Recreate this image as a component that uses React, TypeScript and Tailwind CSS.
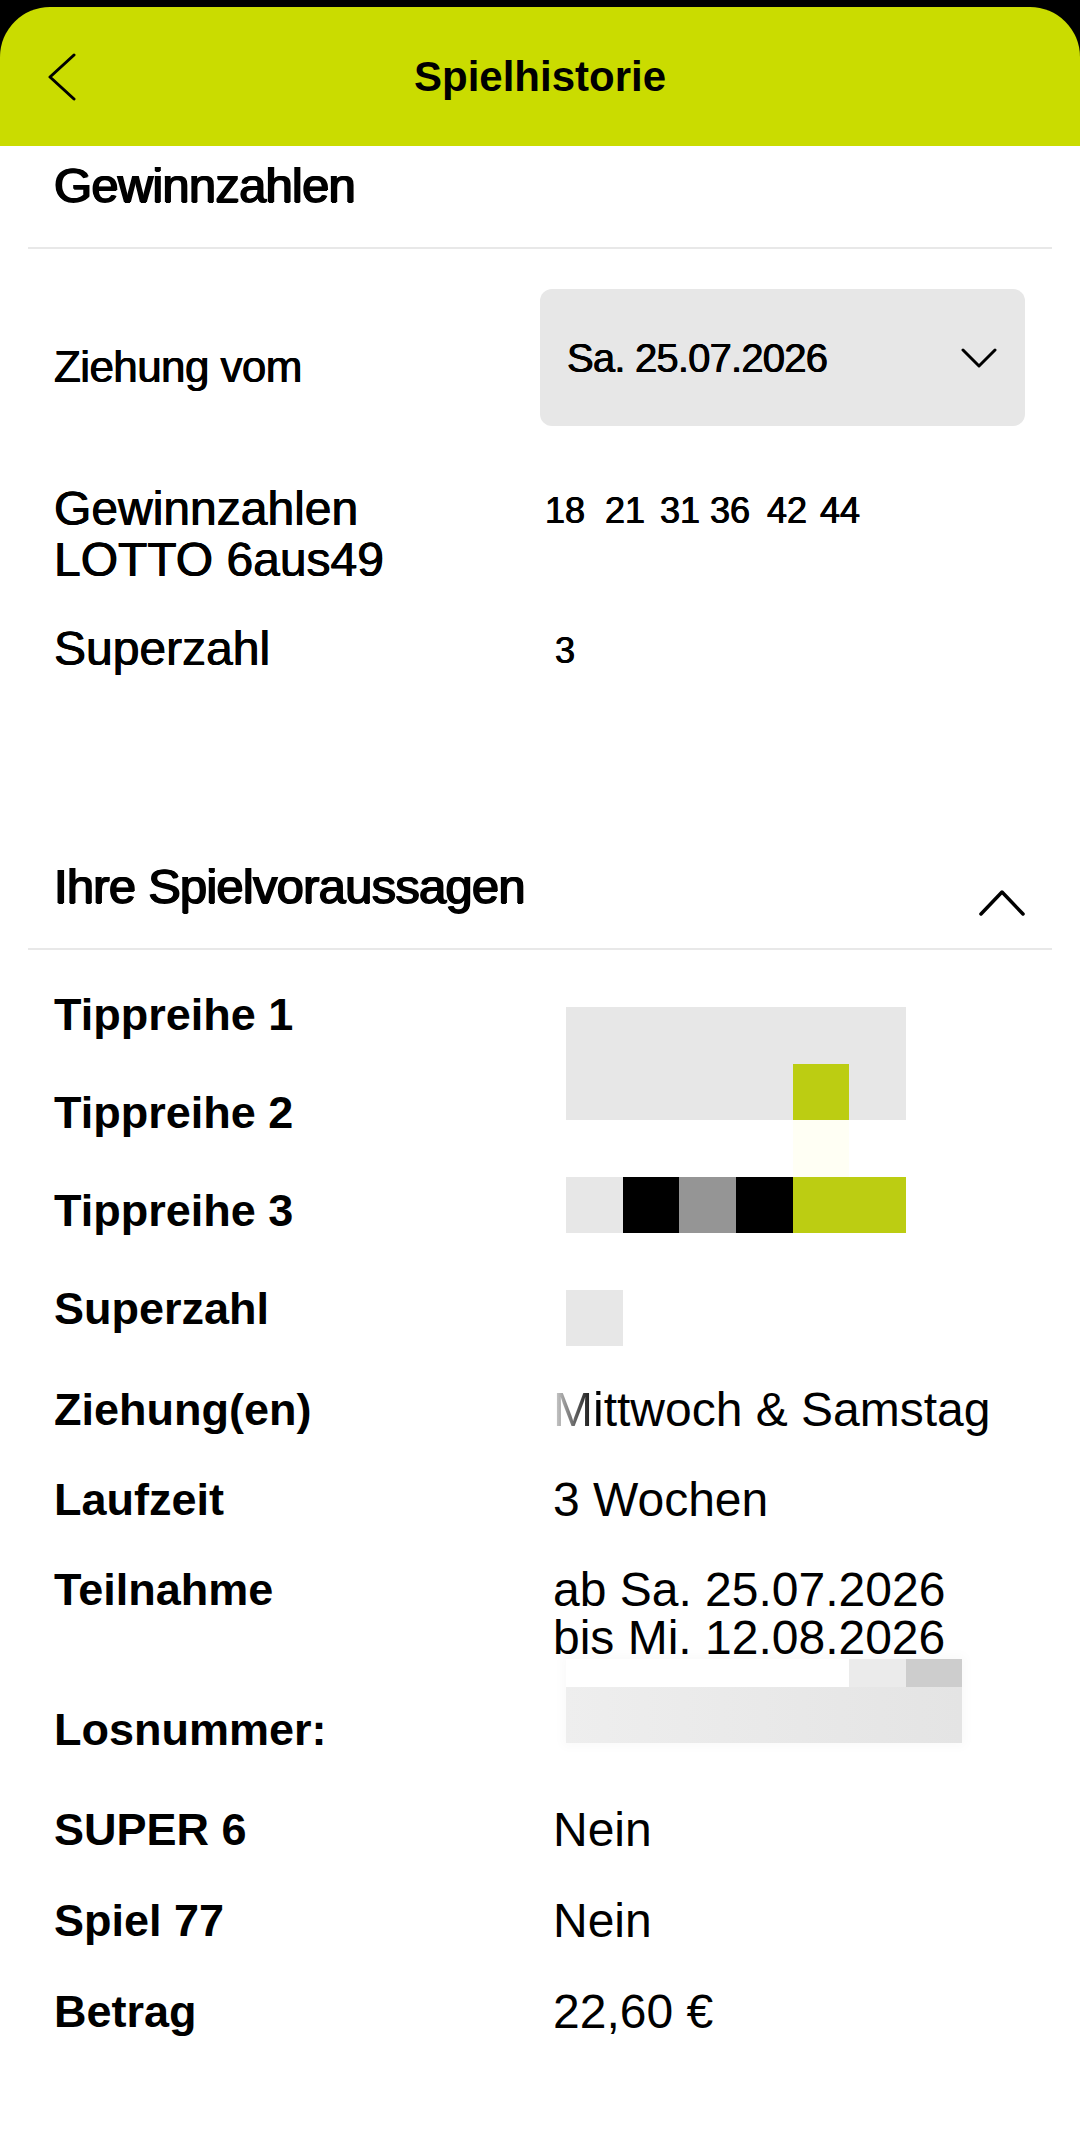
import React from "react";

const G = "bg-[#e7e7e7]";
const W = "bg-white";
const L = "bg-[#bccd12]";
const B = "bg-black";
const M = "bg-[#959595]";
const C = "bg-[#fffff4]";

const mosaic: string[][] = [
  [G, G, G, G, G, G],
  [G, G, G, G, L, G],
  [W, W, W, W, C, W],
  [G, B, M, B, L, L],
  [W, W, W, W, W, W],
  [G, W, W, W, W, W],
];

const numbers: { n: string; w: string }[] = [
  { n: "18", w: "w-[60px]" },
  { n: "21", w: "w-[55px]" },
  { n: "31", w: "w-[50px]" },
  { n: "36", w: "w-[57px]" },
  { n: "42", w: "w-[53px]" },
  { n: "44", w: "" },
];

function Row({
  label,
  children,
  className,
}: {
  label: string;
  children: React.ReactNode;
  className: string;
}) {
  return (
    <div className={"flex items-start " + className}>
      <div className="w-[499px] shrink-0 text-[45px] font-bold leading-[48px]">{label}</div>
      <div className="text-[48px] leading-[48px]">{children}</div>
    </div>
  );
}

export default function App() {
  return (
    <div className="flex min-h-screen flex-col bg-black pt-[7px] font-['Liberation_Sans',Arial,sans-serif] text-black">
      <header className="grid h-[139px] shrink-0 grid-cols-[1fr_auto_1fr] items-center rounded-t-[50px] bg-[#cadc00]">
        <div className="pl-[47px]">
          <svg width="30" height="48" viewBox="0 0 30 48" fill="none">
            <path d="M27 2 L3 24 L27 46" stroke="black" strokeWidth="3" strokeLinecap="round" strokeLinejoin="round" />
          </svg>
        </div>
        <h1 className="text-[42px] font-bold leading-[48px]">Spielhistorie</h1>
        <div />
      </header>

      <main className="flex-1 bg-white">
        <h2 className="mt-[11px] pl-[54px] text-[49px] leading-[56px] tracking-[-0.8px] [text-shadow:0.9px_0_0_black,-0.9px_0_0_black,0_0.5px_0_black]">
          Gewinnzahlen
        </h2>
        <div className="mx-[28px] mt-[34px] h-[2px] bg-[#e8e8e8]" />

        <div className="mt-[40px] flex items-start justify-between pl-[54px] pr-[55px] [text-shadow:0.45px_0_0_black,-0.45px_0_0_black]">
          <div className="mt-[52px] text-[44px] leading-[52px] tracking-[-0.6px]">Ziehung vom</div>
          <div className="flex h-[137px] w-[485px] items-center justify-between rounded-[12px] bg-[#e7e7e7] pl-[27px] pr-[28px]">
            <span className="text-[40px] leading-[48px] tracking-[-0.8px]">Sa. 25.07.2026</span>
            <svg width="36" height="22" viewBox="0 0 36 22" fill="none">
              <path d="M2 3 L18 19 L34 3" stroke="black" strokeWidth="3" strokeLinecap="round" strokeLinejoin="round" />
            </svg>
          </div>
        </div>

        <div className="mt-[57px] flex items-start pl-[54px] [text-shadow:0.45px_0_0_black,-0.45px_0_0_black]">
          <div className="w-[491px] shrink-0 text-[48px] leading-[51px]">
            Gewinnzahlen
            <br />
            LOTTO 6aus49
          </div>
          <div className="mt-[2px] flex text-[36px] leading-[51px]">
            {numbers.map((x) => (
              <span key={x.n} className={x.w}>
                {x.n}
              </span>
            ))}
          </div>
        </div>

        <div className="mt-[38px] flex items-start pl-[54px] [text-shadow:0.45px_0_0_black,-0.45px_0_0_black]">
          <div className="w-[491px] shrink-0 text-[48px] leading-[51px]">Superzahl</div>
          <div className="ml-[10px] mt-[2px] text-[36px] leading-[51px]">3</div>
        </div>

        <div className="mt-[182px] flex items-end justify-between pl-[54px] pr-[55px]">
          <h2 className="text-[49px] leading-[56px] tracking-[-0.8px] [text-shadow:0.9px_0_0_black,-0.9px_0_0_black,0_0.5px_0_black]">
            Ihre Spielvoraussagen
          </h2>
          <svg className="-mb-[2px]" width="46" height="28" viewBox="0 0 46 28" fill="none">
            <path d="M2 26 L23 4 L44 26" stroke="black" strokeWidth="3.5" strokeLinecap="round" strokeLinejoin="round" />
          </svg>
        </div>
        <div className="mx-[28px] mt-[34px] h-[2px] bg-[#e8e8e8]" />

        <div className="mt-[16px] flex items-start pl-[54px]">
          <div className="w-[512px] shrink-0 text-[45px] font-bold leading-[98px]">
            <div>Tippreihe 1</div>
            <div>Tippreihe 2</div>
            <div>Tippreihe 3</div>
            <div>Superzahl</div>
          </div>
          <div className="mt-[41px] grid w-[340px] grid-cols-6">
            {mosaic.flat().map((c, i) => (
              <div key={i} className={"h-[56.5px] " + c} />
            ))}
          </div>
        </div>

        <div className="pl-[54px]">
          <Row label="Ziehung(en)" className="mt-[28px]">
            <span className="bg-linear-to-r from-[#d8d8d8] to-black bg-clip-text text-transparent">Mi</span>
            ttwoch &amp; Samstag
          </Row>
          <Row label="Laufzeit" className="mt-[42px]">
            3 Wochen
          </Row>
          <Row label="Teilnahme" className="mt-[42px]">
            ab Sa. 25.07.2026
            <br />
            bis Mi. 12.08.2026
          </Row>
          <div className="mt-[44px] flex items-start">
            <div className="w-[499px] shrink-0 text-[45px] font-bold leading-[48px]">Losnummer:</div>
            <div className="-mt-[47px] ml-[13px] w-[396px] shadow-[0_0_10px_4px_rgba(0,0,0,0.025)]">
              <div className="flex h-[28px] justify-end">
                <div className="w-[57px] bg-[#ebebeb]" />
                <div className="w-[56px] bg-[#cdcdcd]" />
              </div>
              <div className="h-[56px] bg-linear-to-r from-[#eeeeee] to-[#e4e4e4]" />
            </div>
          </div>
          <Row label="SUPER 6" className="mt-[52px]">
            Nein
          </Row>
          <Row label="Spiel 77" className="mt-[43px]">
            Nein
          </Row>
          <Row label="Betrag" className="mt-[43px]">
            22,60 €
          </Row>
        </div>
      </main>
    </div>
  );
}
